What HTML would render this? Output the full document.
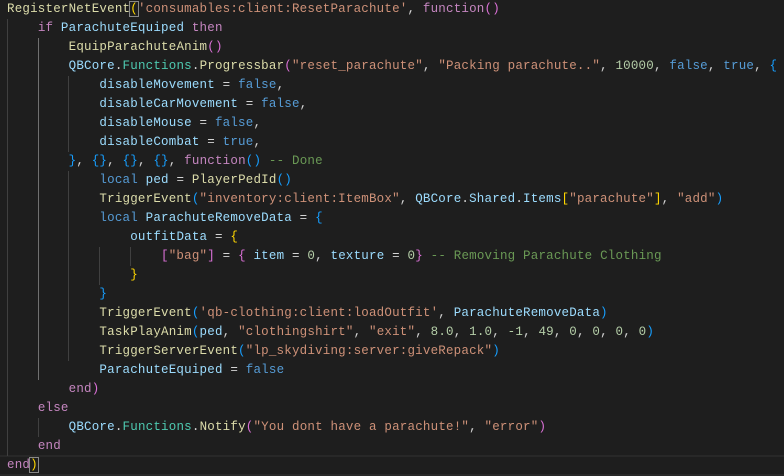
<!DOCTYPE html>
<html><head><meta charset="utf-8"><style>
body{margin:0;background:#1e1e1e;width:784px;height:476px;overflow:hidden;position:relative}
pre{margin:0;position:absolute;left:7px;top:0;font-family:"Liberation Mono",monospace;font-size:12.5px;letter-spacing:0.2px;line-height:19px;color:#d4d4d4;white-space:pre}
.k{color:#c586c0}.f{color:#dcdcaa}.v{color:#9cdcfe}.t{color:#4ec9b0}.s{color:#ce9178}.n{color:#b5cea8}.c{color:#6a9955}.b{color:#569cd6}
.y{color:#ffd700}.p{color:#da70d6}.u{color:#179fff}
.g{position:absolute;width:1px;background:#404040}
.hl{position:absolute;left:0;top:455px;width:784px;height:17px;border:2px solid #282828;border-left:0;border-right:0}
.bx{outline:1px solid #888;}
</style></head><body>
<div class="hl"></div>
<div class="g" style="left:7px;top:19px;height:437px"></div>
<div class="g" style="left:38px;top:38px;height:342px;background:#707070"></div>
<div class="g" style="left:38px;top:418px;height:19px"></div>
<div class="g" style="left:68px;top:76px;height:76px"></div>
<div class="g" style="left:68px;top:171px;height:190px"></div>
<div class="g" style="left:99px;top:247px;height:38px"></div>
<div class="g" style="left:130px;top:247px;height:19px"></div>
<pre><span class="f">RegisterNetEvent</span><span class="y bx">(</span><span class="s">'consumables:client:ResetParachute'</span>, <span class="k">function</span><span class="p">()</span>
    <span class="k">if</span> <span class="v">ParachuteEquiped</span> <span class="k">then</span>
        <span class="f">EquipParachuteAnim</span><span class="p">()</span>
        <span class="v">QBCore</span>.<span class="t">Functions</span>.<span class="f">Progressbar</span><span class="p">(</span><span class="s">"reset_parachute"</span>, <span class="s">"Packing parachute.."</span>, <span class="n">10000</span>, <span class="b">false</span>, <span class="b">true</span>, <span class="u">{</span>
            <span class="v">disableMovement</span> = <span class="b">false</span>,
            <span class="v">disableCarMovement</span> = <span class="b">false</span>,
            <span class="v">disableMouse</span> = <span class="b">false</span>,
            <span class="v">disableCombat</span> = <span class="b">true</span>,
        <span class="u">}</span>, <span class="u">{}</span>, <span class="u">{}</span>, <span class="u">{}</span>, <span class="k">function</span><span class="u">()</span> <span class="c">-- Done</span>
            <span class="b">local</span> <span class="v">ped</span> = <span class="f">PlayerPedId</span><span class="u">()</span>
            <span class="f">TriggerEvent</span><span class="u">(</span><span class="s">"inventory:client:ItemBox"</span>, <span class="v">QBCore</span>.<span class="v">Shared</span>.<span class="v">Items</span><span class="y">[</span><span class="s">"parachute"</span><span class="y">]</span>, <span class="s">"add"</span><span class="u">)</span>
            <span class="b">local</span> <span class="v">ParachuteRemoveData</span> = <span class="u">{</span>
                <span class="v">outfitData</span> = <span class="y">{</span>
                    <span class="p">[</span><span class="s">"bag"</span><span class="p">]</span> = <span class="p">{</span> <span class="v">item</span> = <span class="n">0</span>, <span class="v">texture</span> = <span class="n">0</span><span class="p">}</span> <span class="c">-- Removing Parachute Clothing</span>
                <span class="y">}</span>
            <span class="u">}</span>
            <span class="f">TriggerEvent</span><span class="u">(</span><span class="s">'qb-clothing:client:loadOutfit'</span>, <span class="v">ParachuteRemoveData</span><span class="u">)</span>
            <span class="f">TaskPlayAnim</span><span class="u">(</span><span class="v">ped</span>, <span class="s">"clothingshirt"</span>, <span class="s">"exit"</span>, <span class="n">8.0</span>, <span class="n">1.0</span>, <span class="n">-1</span>, <span class="n">49</span>, <span class="n">0</span>, <span class="n">0</span>, <span class="n">0</span>, <span class="n">0</span><span class="u">)</span>
            <span class="f">TriggerServerEvent</span><span class="u">(</span><span class="s">"lp_skydiving:server:giveRepack"</span><span class="u">)</span>
            <span class="v">ParachuteEquiped</span> = <span class="b">false</span>
        <span class="k">end</span><span class="p">)</span>
    <span class="k">else</span>
        <span class="v">QBCore</span>.<span class="t">Functions</span>.<span class="f">Notify</span><span class="p">(</span><span class="s">"You dont have a parachute!"</span>, <span class="s">"error"</span><span class="p">)</span>
    <span class="k">end</span>
<span class="k">end</span><span class="y bx">)</span></pre>
</body></html>
